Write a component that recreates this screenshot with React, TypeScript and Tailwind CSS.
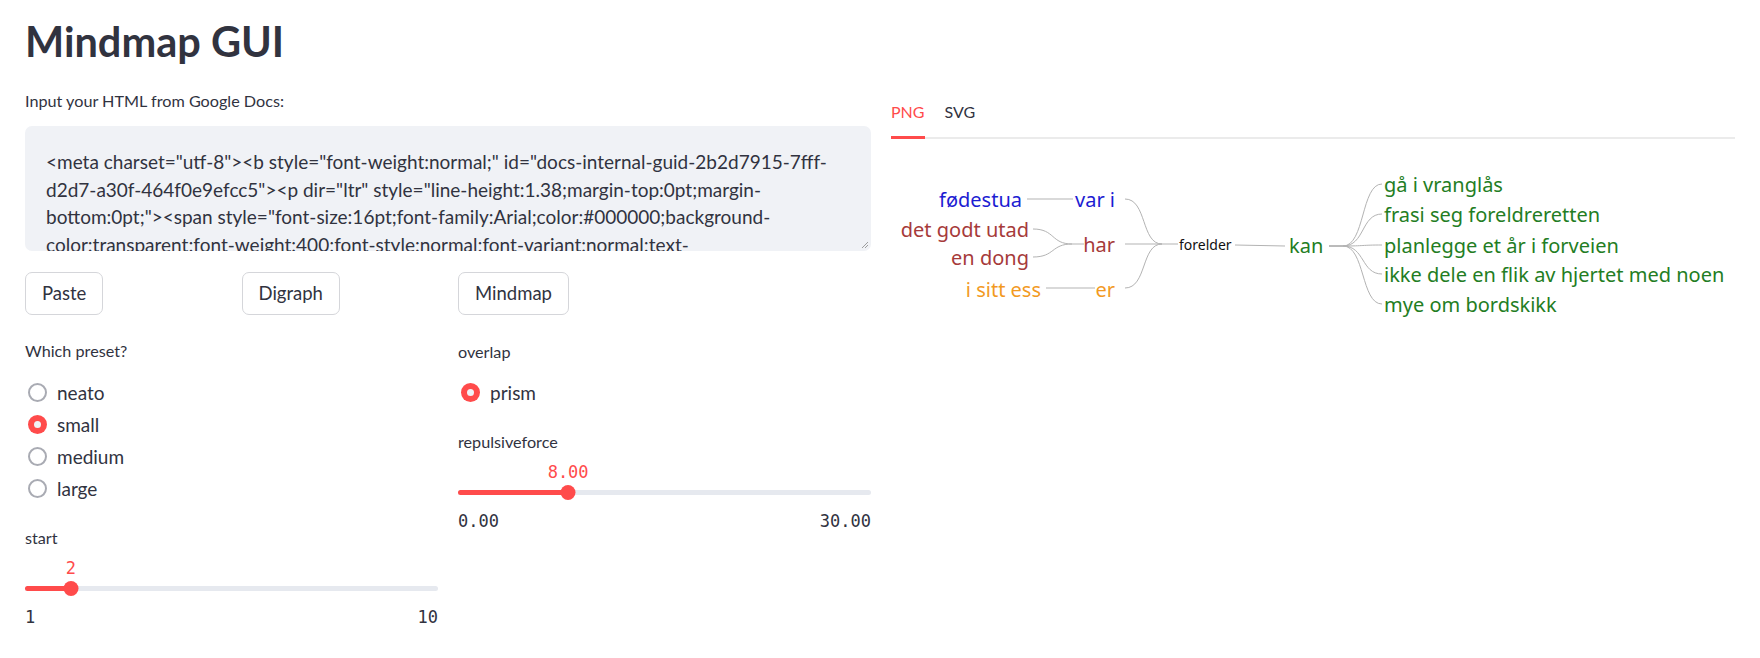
import React from 'react';

const ui = "font-['Lato','Liberation_Sans',sans-serif]";
const mono = "font-['DejaVu_Sans_Mono','Liberation_Mono',monospace]";

const htmlLines = [
  '<meta charset="utf-8"><b style="font-weight:normal;" id="docs-internal-guid-2b2d7915-7fff-',
  'd2d7-a30f-464f0e9efcc5"><p dir="ltr" style="line-height:1.38;margin-top:0pt;margin-',
  'bottom:0pt;"><span style="font-size:16pt;font-family:Arial;color:#000000;background-',
  'color:transparent;font-weight:400;font-style:normal;font-variant:normal;text-',
];

function Button({ children }: { children: React.ReactNode }) {
  return (
    <button className="h-[43px] px-[16px] bg-white border border-[#d5d6da] rounded-[7px] text-[18.5px] text-[#31333f] leading-none">
      {children}
    </button>
  );
}

function Radio({ label, checked }: { label: string; checked?: boolean }) {
  return (
    <div className="h-[32px] flex items-center">
      {checked ? (
        <div className="ml-[3px] w-[19px] h-[19px] rounded-full bg-[#ff4b4b] flex items-center justify-center">
          <div className="w-[7px] h-[7px] rounded-full bg-[#f0f2f6]" />
        </div>
      ) : (
        <div className="ml-[3px] w-[19px] h-[19px] rounded-full border-[2.5px] border-[#a9abb3]" />
      )}
      <span className="ml-[10px] text-[19px] text-[#31333f] leading-none">{label}</span>
    </div>
  );
}

function Slider({ label, value, min, max, digits }: { label: string; value: number; min: number; max: number; digits: number }) {
  const pct = ((value - min) / (max - min)) * 100;
  return (
    <div className="flex flex-col">
      <div className="text-[16.2px] leading-[24px] text-[#31333f]">{label}</div>
      <div className="relative h-[24px] mt-[6px]">
        <span className={`absolute top-0 -translate-x-1/2 text-[17px] leading-[24px] text-[#ff4b4b] ${mono}`} style={{ left: `${pct}%` }}>
          {value.toFixed(digits)}
        </span>
      </div>
      <div className="relative h-[16px] flex items-center">
        <div className="w-full h-[5px] rounded-full bg-[#e6e9ef]" />
        <div className="absolute left-0 h-[5px] rounded-full bg-[#ff4b4b]" style={{ width: `${pct}%` }} />
        <div className="absolute w-[15px] h-[15px] -translate-x-1/2 rounded-full bg-[#ff4b4b]" style={{ left: `${pct}%` }} />
      </div>
      <div className={`mt-[9px] flex justify-between text-[17px] leading-[24px] text-[#31333f] ${mono}`}>
        <span>{min.toFixed(digits)}</span>
        <span>{max.toFixed(digits)}</span>
      </div>
    </div>
  );
}

function Mindmap() {
  const edge = '#b3b3b3';
  const kids = [
    { t: 'gå i vranglås', y: 34 },
    { t: 'frasi seg foreldreretten', y: 64 },
    { t: 'planlegge et år i forveien', y: 95 },
    { t: 'ikke dele en flik av hjertet med noen', y: 124 },
    { t: 'mye om bordskikk', y: 154 },
  ];
  return (
    <svg width="844" height="180" viewBox="0 0 844 180" className="block">
      <g fill="none" stroke={edge} strokeWidth="1">
        <path d="M136,49 L182,49" />
        <path d="M234,49 C256,49 250,94 271,94" />
        <path d="M234,94 L271,94" />
        <path d="M234,138 C256,138 250,94 271,94" />
        <path d="M271,94 L287,94" />
        <path d="M142,79 C164,79 160,94 181,94" />
        <path d="M142,107 C164,107 160,94 181,94" />
        <path d="M181,94 L193,94" />
        <path d="M155,138 L204,138" />
        <path d="M344,95 L394,96" />
        {kids.map((k) => (
          <path key={k.t} d={`M452,96 C474,96 470,${k.y} 491,${k.y}`} />
        ))}
      </g>
      <path d="M438,96 L452,96" stroke="#777" strokeWidth="1" />
      <g fontFamily="'Noto Sans', 'Open Sans', sans-serif" fontSize="20">
        <g fill="#1c1cd2" textAnchor="end">
          <text x="131" y="57">fødestua</text>
          <text x="224" y="57">var i</text>
        </g>
        <g fill="#a63a3a" textAnchor="end">
          <text x="138" y="87">det godt utad</text>
          <text x="138" y="115">en dong</text>
          <text x="224" y="102">har</text>
        </g>
        <g fill="#f29a1f" textAnchor="end">
          <text x="150" y="147">i sitt ess</text>
          <text x="224" y="147">er</text>
        </g>
        <text x="288" y="100" fontSize="14" fill="#111">forelder</text>
        <g fill="#237d23">
          <text x="398" y="103">kan</text>
          {kids.map((k) => (
            <text key={k.t} x="493" y={k.y + 8}>{k.t}</text>
          ))}
        </g>
      </g>
    </svg>
  );
}

export default function App() {
  return (
    <div className={`w-[1760px] h-[658px] bg-white overflow-hidden px-[25px] pt-[9px] text-[#31333f] ${ui}`}>
      <h1 className="text-[41.5px] leading-[64px] font-bold text-[#31333f]">Mindmap GUI</h1>

      <div className="mt-[16px] flex gap-[20px]">
        {/* Left column */}
        <div className="w-[846px] flex flex-col">
          <div className="text-[16.2px] leading-[24px]">Input your HTML from Google Docs:</div>
          <div className="relative mt-[13px] h-[125px] rounded-[7px] bg-[#f0f2f6] overflow-hidden pl-[21px] pt-[22px]">
            {htmlLines.map((l) => (
              <div key={l} className="whitespace-nowrap text-[19px] leading-[27.5px] text-[#31333f]">{l}</div>
            ))}
            <svg className="absolute right-[2px] bottom-[2px]" width="8" height="8" viewBox="0 0 8 8">
              <path d="M7,1 L1,7 M7,4 L4,7" stroke="#888" strokeWidth="0.8" />
            </svg>
          </div>

          <div className="mt-[21px] flex gap-[20px]">
            <div className="w-[413px] flex gap-[20px]">
              <div className="w-[196.5px]"><Button>Paste</Button></div>
              <div className="w-[196.5px]"><Button>Digraph</Button></div>
            </div>
            <div className="w-[413px]"><Button>Mindmap</Button></div>
          </div>

          <div className="mt-[24px] flex gap-[20px]">
            <div className="w-[413px] flex flex-col">
              <div className="text-[16.2px] leading-[24px]">Which preset?</div>
              <div className="mt-[13px] flex flex-col">
                <Radio label="neato" />
                <Radio label="small" checked />
                <Radio label="medium" />
                <Radio label="large" />
              </div>
              <div className="mt-[22px]">
                <Slider label="start" value={2} min={1} max={10} digits={0} />
              </div>
            </div>
            <div className="w-[413px] flex flex-col">
              <div className="text-[16.2px] leading-[24px] mt-[1px]">overlap</div>
              <div className="mt-[12px] flex flex-col">
                <Radio label="prism" checked />
              </div>
              <div className="mt-[22px]">
                <Slider label="repulsiveforce" value={8} min={0} max={30} digits={2} />
              </div>
            </div>
          </div>
        </div>

        {/* Right column */}
        <div className="w-[844px] flex flex-col">
          <div className="flex gap-[20px] items-start border-b-2 border-[#ebebeb]">
            <div className="flex flex-col pt-[11px] -mb-[2px]">
              <span className="text-[16px] leading-[24px] text-[#ff4b4b]">PNG</span>
              <div className="mt-[12px] h-[3px] bg-[#ff4b4b]" />
            </div>
            <div className="flex flex-col pt-[11px]">
              <span className="text-[16px] leading-[24px] text-[#31333f]">SVG</span>
            </div>
          </div>
          <div className="mt-[11px]">
            <Mindmap />
          </div>
        </div>
      </div>
    </div>
  );
}
